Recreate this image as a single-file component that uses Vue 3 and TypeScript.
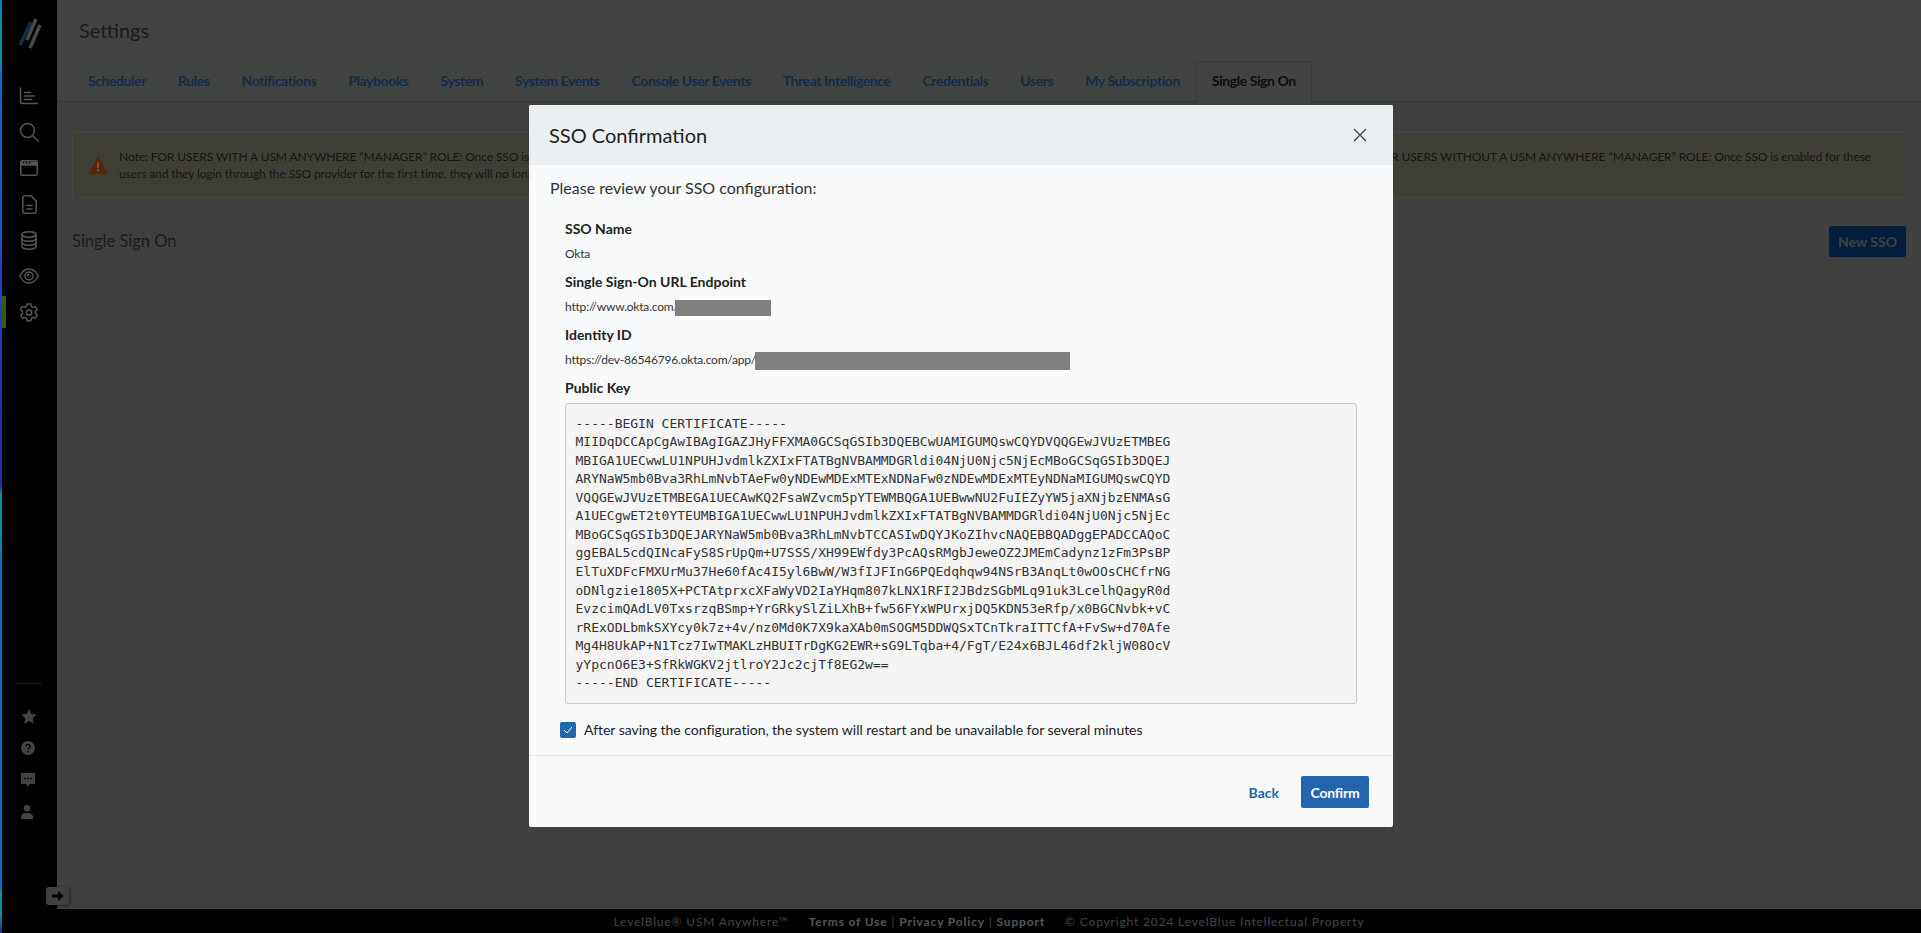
<script setup lang="ts">
const tabs: string[] = [
  'Scheduler', 'Rules', 'Notifications', 'Playbooks', 'System', 'System Events',
  'Console User Events', 'Threat Intelligence', 'Credentials', 'Users', 'My Subscription',
]
const certificate = `-----BEGIN CERTIFICATE-----
MIIDqDCCApCgAwIBAgIGAZJHyFFXMA0GCSqGSIb3DQEBCwUAMIGUMQswCQYDVQQGEwJVUzETMBEG
MBIGA1UECwwLU1NPUHJvdmlkZXIxFTATBgNVBAMMDGRldi04NjU0Njc5NjEcMBoGCSqGSIb3DQEJ
ARYNaW5mb0Bva3RhLmNvbTAeFw0yNDEwMDExMTExNDNaFw0zNDEwMDExMTEyNDNaMIGUMQswCQYD
VQQGEwJVUzETMBEGA1UECAwKQ2FsaWZvcm5pYTEWMBQGA1UEBwwNU2FuIEZyYW5jaXNjbzENMAsG
A1UECgwET2t0YTEUMBIGA1UECwwLU1NPUHJvdmlkZXIxFTATBgNVBAMMDGRldi04NjU0Njc5NjEc
MBoGCSqGSIb3DQEJARYNaW5mb0Bva3RhLmNvbTCCASIwDQYJKoZIhvcNAQEBBQADggEPADCCAQoC
ggEBAL5cdQINcaFyS8SrUpQm+U7SSS/XH99EWfdy3PcAQsRMgbJeweOZ2JMEmCadynz1zFm3PsBP
ElTuXDFcFMXUrMu37He60fAc4I5yl6BwW/W3fIJFInG6PQEdqhqw94NSrB3AnqLt0wOOsCHCfrNG
oDNlgzie1805X+PCTAtprxcXFaWyVD2IaYHqm807kLNX1RFI2JBdzSGbMLq91uk3LcelhQagyR0d
EvzcimQAdLV0TxsrzqBSmp+YrGRkySlZiLXhB+fw56FYxWPUrxjDQ5KDN53eRfp/x0BGCNvbk+vC
rRExODLbmkSXYcy0k7z+4v/nz0Md0K7X9kaXAb0mSOGM5DDWQSxTCnTkraITTCfA+FvSw+d70Afe
Mg4H8UkAP+N1Tcz7IwTMAKLzHBUITrDgKG2EWR+sG9LTqba+4/FgT/E24x6BJL46df2kljW08OcV
yYpcnO6E3+SfRkWGKV2jtlroY2Jc2cjTf8EG2w==
-----END CERTIFICATE-----`
</script>

<template>
  <div class="page">
    <div class="main">
      <aside class="sidebar">
        <div class="logo">
          <svg width="26" height="32" viewBox="0 0 26 32" fill="none" stroke-width="3.500">
            <path d="M14 4 3 27" stroke="#2279b0" />
            <path d="M19 1 10 22" stroke="#b0b8bf" />
            <path d="M23 7 13 30" stroke="#b0b8bf" />
          </svg>
        </div>
        <nav class="nav-top">
          <div class="nav-item">
            <svg width="20" height="18" viewBox="0 0 20 18" fill="none" stroke="currentColor" stroke-width="1.500" stroke-linecap="round">
              <path d="M1.500 1v13.500a2 2 0 0 0 2 2H18.500" />
              <path d="M5.500 5.500h6M5.500 9h10M5.500 12.500h7" />
            </svg>
          </div>
          <div class="nav-item">
            <svg width="20" height="20" viewBox="0 0 20 20" fill="none" stroke="currentColor" stroke-width="1.500" stroke-linecap="round">
              <circle cx="8.500" cy="8.500" r="7" />
              <path d="M13.700 13.700 19 19" />
            </svg>
          </div>
          <div class="nav-item">
            <svg width="18" height="16" viewBox="0 0 18 16" fill="none" stroke="currentColor" stroke-width="1.500">
              <rect x="0.750" y="0.750" width="16.500" height="14.500" rx="1.500" />
              <path d="M1 2.500h16v2.500H1z" fill="currentColor" />
              <path d="M3 2.800h1.400M6 2.800h1.400M9 2.800h1.400" stroke="#000" stroke-width="1.200" />
            </svg>
          </div>
          <div class="nav-item">
            <svg width="15" height="19" viewBox="0 0 15 19" fill="none" stroke="currentColor" stroke-width="1.500" stroke-linejoin="round" stroke-linecap="round">
              <path d="M9 .8H3A2.200 2.200 0 0 0 .8 3v13A2.200 2.200 0 0 0 3 18.200h9a2.200 2.200 0 0 0 2.200-2.200V6z" />
              <path d="M5 10.500h5M5 14h5" />
            </svg>
          </div>
          <div class="nav-item">
            <svg width="16" height="19" viewBox="0 0 16 19" fill="none" stroke="currentColor" stroke-width="1.500">
              <ellipse cx="8" cy="3.500" rx="7" ry="2.700" />
              <path d="M1 3.500v12c0 1.500 3.100 2.700 7 2.700s7-1.200 7-2.700v-12" />
              <path d="M1 7.500c0 1.500 3.100 2.700 7 2.700s7-1.200 7-2.700M1 11.500c0 1.500 3.100 2.700 7 2.700s7-1.200 7-2.700" />
            </svg>
          </div>
          <div class="nav-item">
            <svg width="20" height="16" viewBox="0 0 20 16" fill="none" stroke="currentColor" stroke-width="1.500">
              <path d="M.8 8C3 3.500 6.200 1 10 1s7 2.500 9.200 7C17 12.500 13.800 15 10 15S3 12.500.8 8z" />
              <circle cx="10" cy="8" r="4" />
              <path d="M10 6.200a1.800 1.800 0 0 0-1.800 1.800" />
            </svg>
          </div>
          <div class="nav-item active">
            <svg width="18" height="19" viewBox="0 0 18 19" fill="none" stroke="currentColor" stroke-width="1.500" stroke-linejoin="round">
              <path d="M7.200 1h3.600l.6 2.400 1.700 1 2.400-.7 1.700 3-1.700 1.700v2l1.700 1.700-1.700 3-2.400-.7-1.700 1-.6 2.400H7.200l-.6-2.400-1.700-1-2.400.7-1.700-3 1.700-1.700v-2L.3 6.700l1.700-3 2.400.7 1.700-1z" />
              <circle cx="9" cy="9.500" r="2.600" />
            </svg>
          </div>
        </nav>
        <div class="nav-spacer"></div>
        <div class="nav-rule"></div>
        <nav class="nav-bottom">
          <div class="nav-item small">
            <svg width="16" height="15" viewBox="0 0 16 15" fill="currentColor"><path d="m8 0 2.300 4.900 5.400.7-4 3.700 1.100 5.400L8 12l-4.800 2.700 1.100-5.400-4-3.700 5.400-.7z" /></svg>
          </div>
          <div class="nav-item small shift">
            <svg width="14" height="14" viewBox="0 0 14 14"><circle cx="7" cy="7" r="7" fill="currentColor" /><path d="M5 5.300a2 2 0 1 1 3 1.800c-.7.400-1 .8-1 1.500" fill="none" stroke="#000" stroke-width="1.400" /><circle cx="7" cy="10.700" r=".9" fill="#000" /></svg>
          </div>
          <div class="nav-item small shift">
            <svg width="14" height="14" viewBox="0 0 14 14"><path d="M1 0h12a1 1 0 0 1 1 1v9a1 1 0 0 1-1 1H8.500L6.500 14l-1-3H1a1 1 0 0 1-1-1V1a1 1 0 0 1 1-1z" fill="currentColor" /><circle cx="4" cy="5.500" r=".9" fill="#000" /><circle cx="7" cy="5.500" r=".9" fill="#000" /><circle cx="10" cy="5.500" r=".9" fill="#000" /></svg>
          </div>
          <div class="nav-item small shift2">
            <svg width="12" height="14" viewBox="0 0 12 14" fill="currentColor"><circle cx="6" cy="3.200" r="3.200" /><path d="M0 14v-2c0-2 2-4 4.500-4h3C10 8 12 10 12 12v2z" /></svg>
          </div>
        </nav>
      </aside>

      <main class="content">
        <header class="top">
          <h1 class="page-title">Settings</h1>
          <ul class="tabs">
            <li v-for="t in tabs" :key="t" class="tab">{{ t }}</li>
            <li class="tab current">Single Sign On</li>
          </ul>
        </header>
        <section class="section">
          <div class="warning">
            <svg class="warn-icon" width="20" height="18" viewBox="0 0 20 18">
              <path d="M10 0 20 18H0z" fill="#d4601a" />
              <path d="M9 6h2v6H9zM9 13.300h2v2H9z" fill="#f3e7b9" />
            </svg>
            <div class="warn-text">
              <div class="warn-line">
                <span>Note: FOR USERS WITH A USM ANYWHERE “MANAGER” ROLE: Once SSO is enabled for these</span>
                <span>FOR USERS WITHOUT A USM ANYWHERE “MANAGER” ROLE: Once SSO is enabled for these</span>
              </div>
              <div>users and they login through the SSO provider for the first time, they will no longer be able to login with their password.</div>
            </div>
          </div>
          <div class="section-head">
            <h2 class="section-title">Single Sign On</h2>
            <button class="new-btn">New SSO</button>
          </div>
        </section>
      </main>
    </div>

    <footer class="footer">
      <span>LevelBlue® USM Anywhere™</span>
      <span class="links"><b>Terms of Use</b> | <b>Privacy Policy</b> | <b>Support</b></span>
      <span>© Copyright 2024 LevelBlue Intellectual Property</span>
    </footer>

    <button class="collapse">
      <svg width="12" height="10" viewBox="0 0 12 10" fill="#000"><path d="M0 3.500h6V0l6 5-6 5V6.500H0z" /></svg>
    </button>

    <div class="overlay"></div>
    <div class="edge"></div>

    <div class="modal">
      <div class="modal-head">
        <h3 class="modal-title">SSO Confirmation</h3>
        <svg class="close" width="14" height="14" viewBox="0 0 14 14" fill="none" stroke="#444" stroke-width="1.200">
          <path d="M1 1l12 12M13 1 1 13" />
        </svg>
      </div>
      <div class="modal-body">
        <p class="intro">Please review your SSO configuration:</p>
        <div class="fields">
          <div class="field">
            <div class="label">SSO Name</div>
            <div class="value">Okta</div>
          </div>
          <div class="field">
            <div class="label">Single Sign-On URL Endpoint</div>
            <div class="value">http://www.okta.com/<span class="redact one"></span></div>
          </div>
          <div class="field">
            <div class="label">Identity ID</div>
            <div class="value">https://dev-86546796.okta.com/app/<span class="redact two"></span></div>
          </div>
          <div class="label">Public Key</div>
          <pre class="cert">{{ certificate }}</pre>
        </div>
        <label class="check">
          <span class="box">
            <svg width="10" height="8" viewBox="0 0 10 8" fill="none" stroke="#fff" stroke-width="1"><path d="M1 4l3 3 5-6" /></svg>
          </span>
          After saving the configuration, the system will restart and be unavailable for several minutes
        </label>
      </div>
      <div class="modal-foot">
        <button class="back">Back</button>
        <button class="confirm">Confirm</button>
      </div>
    </div>
  </div>
</template>

<style>
html, body { margin: 0; padding: 0; background: #000; }
</style>

<style scoped>
.page {
  position: relative;
  width: 100%;
  height: 933px;
  overflow: hidden;
  display: flex;
  flex-direction: column;
  font-family: Lato, "Liberation Sans", sans-serif;
  background: #000;
  color: #4a4a4a;
}
.main { flex: 1; display: flex; min-height: 0; }
.sidebar {
  width: 57px;
  flex: none;
  background: #000;
  display: flex;
  flex-direction: column;
  align-items: stretch;
  color: #d5d5d5;
}
.logo { height: 78px; box-sizing: border-box; padding: 18px 0 0 17px; }
.nav-item { height: 36px; display: flex; align-items: center; justify-content: center; padding-left: 1px; position: relative; }
.nav-item.active::before {
  content: "";
  position: absolute;
  left: 2px;
  top: 2px;
  width: 4px;
  height: 32px;
  background: #98d82c;
}
.nav-spacer { flex: 1; }
.nav-rule { height: 1px; background: #4a4a4a; margin: 0 15px 16px 16px; }
.nav-bottom { padding-bottom: 81px; }
.nav-item.small { height: 32px; color: #a6a6a6; }
.nav-item.shift { padding-left: 0; padding-right: 1px; }
.nav-item.shift2 { padding-left: 0; padding-right: 3px; }

.content { flex: 1; min-width: 0; background: #a0a0a0; display: flex; flex-direction: column; }
.top { height: 101px; background: #a5aaa8; border-bottom: 1px solid #8a8e8c; position: relative; }
.page-title { margin: 0; position: absolute; left: 22px; top: 16px; font-size: 20px; line-height: 28px; font-weight: 400; color: #444; }
.tabs { list-style: none; margin: 0; padding: 61px 0 0 15px; display: flex; height: 41px; }
.tab {
  padding: 0 15px;
  font-size: 14px;
  font-weight: 700;
  letter-spacing: -.43px;
  line-height: 38px;
  color: #2f6cb0;
  border: 1px solid transparent;
  border-bottom: 0;
  white-space: nowrap;
}
.tab.current { color: #222; background: #a5aaa8; border-color: #8a8e8c; height: 41px; }
.section { padding: 30px 15px 0; }
.warning {
  height: 65px;
  box-sizing: border-box;
  background: #a09e87;
  border: 1px solid #aeb3a8;
  display: flex;
  align-items: center;
  padding-left: 15px;
}
.warn-icon { flex: none; margin-right: 11px; }
.warn-text { flex: 1; font-size: 12px; letter-spacing: -.1px; line-height: 17px; color: #333; padding-right: 34px; }
.warn-line { display: flex; justify-content: space-between; }
.section-head { display: flex; justify-content: space-between; align-items: center; margin-top: 29px; }
.section-title { margin: 0 0 2px; font-size: 16.500px; font-weight: 400; color: #444; }
.new-btn {
  width: 77px;
  height: 31px;
  border: 0;
  border-radius: 2px;
  background: #0a4a96;
  color: #9aa2ac;
  font: 700 14px Lato, sans-serif;
}
.footer {
  height: 24px;
  flex: none;
  margin-left: 57px;
  display: flex;
  justify-content: center;
  align-items: center;
  gap: 20px;
  background: #000;
  color: #aaa;
  font-size: 12px;
  letter-spacing: .83px;
  white-space: nowrap;
}
.footer b { color: #d5d5d5; }
.collapse {
  position: absolute;
  left: 46px;
  top: 887px;
  width: 23px;
  height: 18px;
  padding: 0;
  border: 0;
  border-radius: 3px;
  background: #a0a0a0;
  box-shadow: 1px 1px 3px rgba(0, 0, 0, .5);
  display: flex;
  align-items: center;
  justify-content: center;
}
.overlay { position: absolute; inset: 0; background: rgba(0, 0, 0, .6); }
.edge {
  position: absolute;
  left: 0;
  top: 0;
  bottom: 0;
  width: 1.500px;
  background: linear-gradient(#0a7cc4 0, #12909c 3%, #12909c 6%, #0a6cc8 8%, #1a50c8 25%, #2a2aa0 45%, #2a2aa0 52%, #12909c 53%, #12909c 57%, #0a6cc8 60%, #0a6cc8 95%, #12909c 96%, #12909c 98%, #2a2a88 100%);
}

.modal {
  position: absolute;
  left: 529px;
  top: 105px;
  width: 864px;
  height: 722px;
  background: #f9fafc;
  border-radius: 2px;
  overflow: hidden;
  display: flex;
  flex-direction: column;
  color: #222;
}
.modal-head {
  height: 60px;
  flex: none;
  background: #eceff2;
  display: flex;
  align-items: center;
  justify-content: space-between;
  padding: 0 26px 0 20px;
}
.modal-title { margin: 0; font-size: 20px; font-weight: 400; color: #222; }
.modal-body { flex: 1; padding: 12px 0 0 21px; min-height: 0; }
.intro { margin: 0; font-size: 16px; line-height: 22px; color: #333; }
.fields { padding: 20px 36px 0 15px; }
.field { height: 53px; }
.label { font-size: 14px; font-weight: 700; line-height: 20px; color: #222; }
.value { font-size: 12px; letter-spacing: -.2px; line-height: 16px; margin-top: 7px; color: #333; white-space: nowrap; }
.redact { display: inline-block; background: #808080; vertical-align: middle; }
.redact.one { width: 96px; height: 16px; margin-left: -4px; }
.redact.two { width: 315px; height: 18px; margin-left: -1px; }
.cert {
  margin: 5px 0 0;
  box-sizing: border-box;
  height: 301px;
  padding: 10.500px 9.500px 8.500px;
  background: #f5f5f5;
  border: 1px solid #ccc;
  border-radius: 3px;
  font-family: "DejaVu Sans Mono", monospace;
  font-size: 13px;
  line-height: 18.570px;
  color: #333;
  overflow: hidden;
}
.check { display: flex; align-items: center; gap: 8px; margin: 17px 0 0 10px; font-size: 14px; letter-spacing: -.03px; line-height: 18px; color: #222; }
.box { width: 16px; height: 16px; border-radius: 2px; background: #2266b0; display: flex; align-items: center; justify-content: center; flex: none; }
.modal-foot {
  height: 72px;
  flex: none;
  box-sizing: border-box;
  border-top: 1px solid #e2e6ec;
  display: flex;
  justify-content: flex-end;
  align-items: flex-start;
  padding: 20px 24px 0 0;
  gap: 22px;
}
.back { border: 0; background: none; padding: 0; height: 32px; color: #2266b0; font: 700 14px Lato, sans-serif; }
.confirm { width: 68px; height: 32px; border: 0; border-radius: 2px; background: #2266b0; color: #fff; font: 700 14px Lato, sans-serif; letter-spacing: -.2px; }
</style>
